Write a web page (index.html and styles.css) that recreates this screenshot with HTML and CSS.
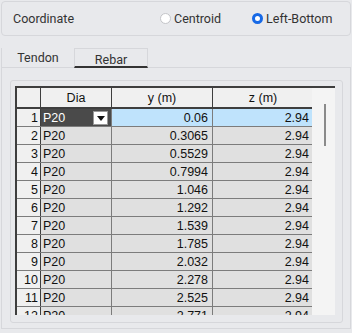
FILE: index.html
```html
<!DOCTYPE html>
<html lang="en">
<head>
    <meta charset="UTF-8">
    <meta name="viewport" content="width=device-width, initial-scale=1.0">
    <title>Rebar</title>
    <link rel="stylesheet" href="styles.css">
</head>
<body>
    <div class="coordBox">
        <span class="coordLabel">Coordinate</span>
        <label class="radio"><span class="dot"></span>Centroid</label>
        <label class="radio on"><span class="dot"></span>Left-Bottom</label>
    </div>

    <div class="tabs">
        <div class="tab">Tendon</div>
        <div class="tab active">Rebar</div>
    </div>

    <div class="panel">
        <div class="inner">
            <div class="grid">
                <div class="tblWrap">
                    <table class="tbl">
                        <tr>
                            <th class="corner"></th>
                            <th class="colDia">Dia</th>
                            <th class="colNum">y (m)</th>
                            <th class="colNum">z (m)</th>
                        </tr>
                        <tr class="sel">
                            <td class="rn">1</td>
                            <td class="dia edit">P20<span class="drop"></span></td>
                            <td class="num">0.06</td>
                            <td class="num">2.94</td>
                        </tr>
                        <tr><td class="rn">2</td><td class="dia">P20</td><td class="num">0.3065</td><td class="num">2.94</td></tr>
                        <tr><td class="rn">3</td><td class="dia">P20</td><td class="num">0.5529</td><td class="num">2.94</td></tr>
                        <tr><td class="rn">4</td><td class="dia">P20</td><td class="num">0.7994</td><td class="num">2.94</td></tr>
                        <tr><td class="rn">5</td><td class="dia">P20</td><td class="num">1.046</td><td class="num">2.94</td></tr>
                        <tr><td class="rn">6</td><td class="dia">P20</td><td class="num">1.292</td><td class="num">2.94</td></tr>
                        <tr><td class="rn">7</td><td class="dia">P20</td><td class="num">1.539</td><td class="num">2.94</td></tr>
                        <tr><td class="rn">8</td><td class="dia">P20</td><td class="num">1.785</td><td class="num">2.94</td></tr>
                        <tr><td class="rn">9</td><td class="dia">P20</td><td class="num">2.032</td><td class="num">2.94</td></tr>
                        <tr><td class="rn">10</td><td class="dia">P20</td><td class="num">2.278</td><td class="num">2.94</td></tr>
                        <tr><td class="rn">11</td><td class="dia">P20</td><td class="num">2.525</td><td class="num">2.94</td></tr>
                        <tr><td class="rn">12</td><td class="dia">P20</td><td class="num">2.771</td><td class="num">2.94</td></tr>
                    </table>
                </div>
                <div class="scroll"><div class="thumb"></div></div>
            </div>
        </div>
    </div>
</body>
</html>
```

FILE: styles.css
```css
body{
    margin: 0;
    padding: 1px;
    background: #e8e9ec;
    font-family: Roboto, "Noto Sans", sans-serif;
    font-size: 12.5px;
    color: #333;
    height: 331px;
    overflow: hidden;
}
.coordBox{
    height: 33px;
    border: 1px solid #d6d7db;
    border-radius: 4px;
    display: flex;
    align-items: center;
    padding-left: 11px;
    white-space: nowrap;
}
.coordLabel{
    width: 147px;
    flex-shrink: 0;
}
.radio{
    display: flex;
    align-items: center;
    margin-right: 31px;
    flex-shrink: 0;
}
.dot{
    width: 9px;
    height: 9px;
    border-radius: 50%;
    border: 1px solid #c4c5c9;
    background: #fff;
    margin-right: 3px;
}
.radio.on .dot{
    width: 5px;
    height: 5px;
    border: 3px solid #1769e6;
    background: #fff;
}
.tabs{
    display: flex;
    margin-top: 12px;
    height: 19px;
    border-left: 1px solid #d6d7db;
}
.tab{
    width: 72px;
    text-align: center;
    line-height: 20px;
    color: #333;
}
.tab.active{
    width: 72px;
    border: 1px solid #d6d7db;
    border-bottom: 2px solid #333;
    line-height: 22px;
    height: 17px;
}
.panel{
    border: 1px solid #d6d7db;
    padding: 12px 7px 5px 8px;
    height: 243px;
}
.inner{
    border: 1px solid #d6d7db;
    border-radius: 3px;
    padding: 5px 7px 9px 4px;
    height: 227px;
}
.grid{
    display: flex;
    height: 227px;
    overflow: hidden;
    border-top: 2px solid #3e3e3e;
    border-left: 2px solid #3e3e3e;
    background: #f4f4f4;
    font-family: "Liberation Sans", Arial, sans-serif;
    font-size: 12.5px;
    color: #111;
}
.tblWrap{
    width: 295px;
}
.tbl{
    border-collapse: collapse;
    table-layout: fixed;
    width: 295px;
}
.tbl th{
    height: 19px;
    padding: 0;
    font-weight: normal;
    background: #f0f0f0;
    border-right: 1px solid #3e3e3e;
    border-bottom: 2px solid #3e3e3e;
    text-align: center;
}
.tbl .corner{
    width: 23px;
}
.tbl .colDia{
    width: 70px;
}
.tbl .colNum{
    width: 100px;
}
.tbl td{
    height: 17px;
    padding: 0 3px;
    background: #e0e0e0;
    border-right: 1px solid #7c7c7c;
    border-bottom: 1px solid #7c7c7c;
    white-space: nowrap;
    overflow: hidden;
}
.tbl td.rn{
    background: #f0f0f0;
    text-align: right;
    padding: 0 2px 0 0;
    border-right: 1px solid #3e3e3e;
}
.tbl td.num{
    text-align: right;
    padding-right: 4px;
}
.tbl td.dia{
    padding-left: 2px;
}
.tbl tr.sel td.num{
    background: #bfe3fc;
}
.tbl td.edit{
    background: #4a4a4a;
    color: #fff;
    position: relative;
}
.drop{
    position: absolute;
    right: 3px;
    top: 2px;
    width: 13px;
    height: 12px;
    background: #fff;
    border: 1px solid #999;
}
.drop::after{
    content: "";
    position: absolute;
    left: 3px;
    top: 4px;
    border-left: 4px solid transparent;
    border-right: 4px solid transparent;
    border-top: 5px solid #111;
}
.scroll{
    width: 22px;
    position: relative;
    background: #f4f4f4;
}
.thumb{
    position: absolute;
    left: 12px;
    top: 16px;
    width: 2px;
    height: 42px;
    background: #8a8a8a;
}
```
